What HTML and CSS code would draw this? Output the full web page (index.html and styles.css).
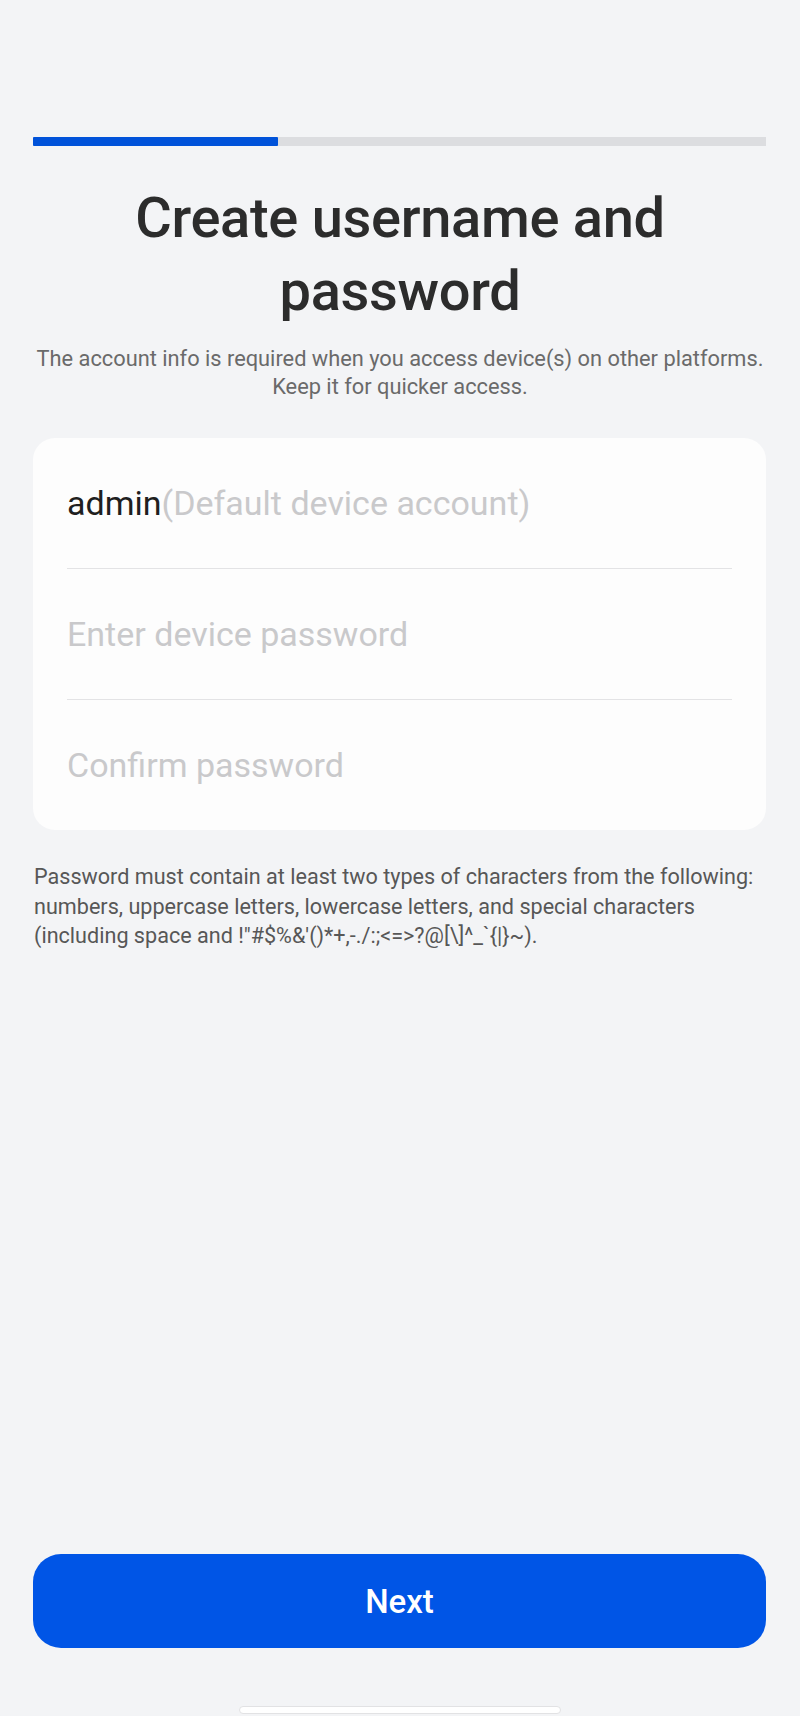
FILE: index.html
```html
<!DOCTYPE html>
<html lang="en">
<head>
<meta charset="utf-8">
<title>Create username and password</title>
<link rel="stylesheet" href="styles.css">
</head>
<body>
<div class="page">
  <div class="progress"><div class="progress-fill"></div></div>
  <h1 class="title">Create username and password</h1>
  <p class="subtitle">The account info is required when you access device(s) on other platforms. Keep it for quicker access.</p>
  <div class="card">
    <div class="row"><span class="value">admin</span><span class="placeholder">(Default device account)</span></div>
    <div class="row"><span class="placeholder">Enter device password</span></div>
    <div class="row"><span class="placeholder">Confirm password</span></div>
  </div>
  <p class="hint">Password must contain at least two types of characters from the following: numbers, uppercase letters, lowercase letters, and special characters (including space and !"#$%&amp;'()*+,-./:;&lt;=&gt;?@[\]^_`{|}~).</p>
  <div class="spacer"></div>
  <button class="next">Next</button>
  <div class="home-indicator"></div>
</div>
</body>
</html>
```
FILE: styles.css
```css
html, body {
  margin: 0;
  padding: 0;
  background: #f3f4f6;
}
.page {
  height: 1716px;
  display: flex;
  flex-direction: column;
  font-family: Roboto, "Noto Sans", sans-serif;
  overflow: hidden;
}
.progress {
  margin: 137px 34px 0 33px;
  height: 9px;
  background: #dcdde0;
  display: flex;
}
.progress-fill {
  width: 245px;
  background: #0052d9;
  border-radius: 1px;
}
.title {
  margin: 36px 40px 0;
  font-size: 56px;
  font-weight: 500;
  line-height: 73px;
  color: #2c2c2c;
  text-align: center;
  letter-spacing: -0.3px;
}
.subtitle {
  margin: 17px 30px 0;
  font-size: 21.8px;
  line-height: 28px;
  color: #6a6a6a;
  text-align: center;
}
.card {
  margin: 37px 34px 0 33px;
  background: #fdfdfd;
  border-radius: 22px;
  padding: 0 34px;
  display: flex;
  flex-direction: column;
}
.row {
  height: 130px;
  display: flex;
  align-items: center;
  font-size: 34px;
  border-bottom: 1px solid #e3e3e5;
}
.row:last-child {
  border-bottom: none;
}
.value {
  color: #1f1f1f;
}
.placeholder {
  color: #c9c9cb;
}
.hint {
  margin: 32px 33px 0 34px;
  font-size: 21.6px;
  line-height: 29.5px;
  color: #575757;
}
.spacer {
  flex: 1;
}
.next {
  margin: 0 34px 0 33px;
  height: 94px;
  border: none;
  border-radius: 28px;
  background: #0055e6;
  color: #ffffff;
  font-family: Roboto, "Noto Sans", sans-serif;
  font-size: 33px;
  font-weight: 500;
}
.home-indicator {
  margin: 58px auto 2px;
  width: 320px;
  height: 6px;
  border: 1px solid #e2e2e4;
  border-radius: 4px;
  background: #ffffff;
}
```
